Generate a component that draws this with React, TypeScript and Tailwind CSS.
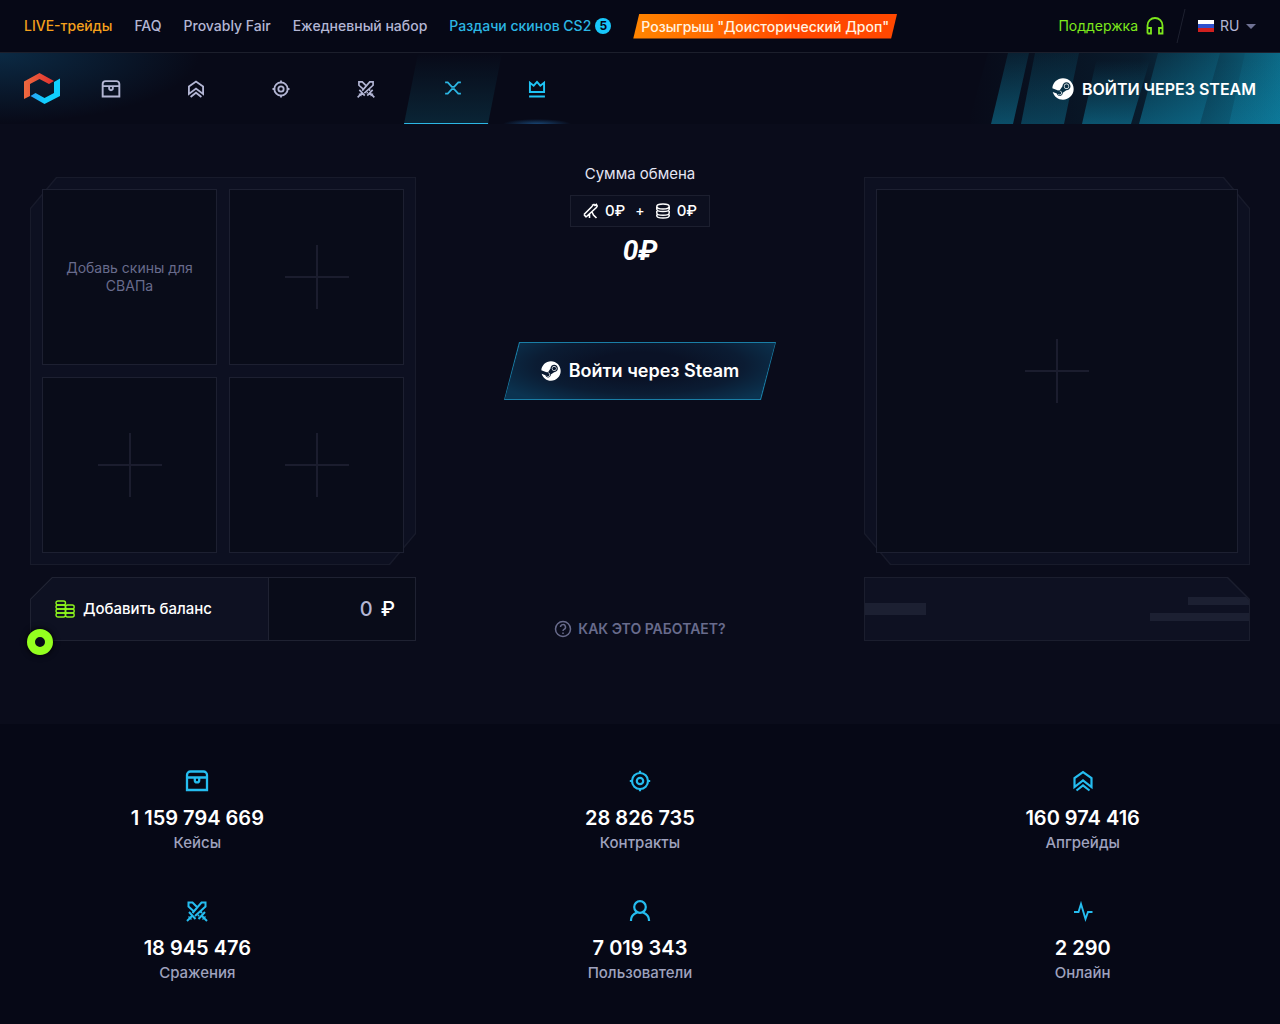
import React from 'react';
import { FaSteam } from 'react-icons/fa';

interface IconProps {
  className?: string;
}

interface Stat {
  label: string;
  value: string;
  icon: React.ComponentType<IconProps>;
}

function ChestIcon({ className }: IconProps) {
  return (
    <svg viewBox="0 0 24 24" className={className} fill="none" stroke="currentColor" strokeWidth="2.3" aria-hidden="true">
      <path d="M2 21V6a3.500 3.500 0 0 1 3.500-3.500h13A3.500 3.500 0 0 1 22 6v15zM2 8.500h20" />
      <path d="M9.800 8.500v2.700a2.200 2.200 0 0 0 4.400 0V8.500" />
    </svg>
  );
}

function UpgradeIcon({ className }: IconProps) {
  return (
    <svg viewBox="0 0 24 24" className={className} fill="none" stroke="currentColor" strokeWidth="2.2" aria-hidden="true">
      <path d="M3.500 18V9L12 3l8.500 6v9L12 11.500z" />
      <path d="M5.500 21.500 12 16.500l6.500 5" />
    </svg>
  );
}

function TargetIcon({ className }: IconProps) {
  return (
    <svg viewBox="0 0 24 24" className={className} fill="none" stroke="currentColor" strokeWidth="2.2" aria-hidden="true">
      <circle cx="12" cy="12" r="8" />
      <circle cx="12" cy="12" r="3.200" />
      <path d="M12 1.800V5M12 19v3.200M1.800 12H5M19 12h3.200" />
    </svg>
  );
}

function SwordsIcon({ className }: IconProps) {
  return (
    <svg viewBox="0 0 24 24" className={className} fill="none" stroke="currentColor" strokeWidth="2" aria-hidden="true">
      <path d="M7.500 14 16.500 3.500h4V7.500L10 17" />
      <path d="M9 12.500 3.500 7.500V3.500h4L12 8M13 16l1 1M15.500 12.500l1.500 1.500" />
      <path d="m4 13 6.500 7M7 17l-5 5M20 13l-6.500 7M17 17l5 5" />
      <path d="M3.500 17.500 6.500 20.500M20.500 17.500 17.500 20.500" strokeWidth="1.400" />
    </svg>
  );
}

function SwapIcon({ className }: IconProps) {
  return (
    <svg viewBox="0 0 24 24" className={className} fill="none" stroke="currentColor" strokeWidth="2.3" aria-hidden="true">
      <path d="M1.500 4.500H5l5.500 6h3l5.500-6h3.500M1.500 19.500H5l5.500-6h3l5.500 6h3.500" />
    </svg>
  );
}

function CrownIcon({ className }: IconProps) {
  return (
    <svg viewBox="0 0 24 24" className={className} fill="none" stroke="currentColor" strokeWidth="2.3" aria-hidden="true">
      <path d="M3.500 15.500V4.500L8 8l4-4.500L16 8l4.500-3.500v11zM2.500 21h19" />
    </svg>
  );
}

function UserIcon({ className }: IconProps) {
  return (
    <svg viewBox="0 0 24 24" className={className} fill="none" stroke="currentColor" strokeWidth="2.2" aria-hidden="true">
      <circle cx="12" cy="8" r="5.800" />
      <path d="M3 22v-1c0-3 2.500-6 6-7.500M21 22v-1c0-3-2.500-6-6-7.500" />
    </svg>
  );
}

function PulseIcon({ className }: IconProps) {
  return (
    <svg viewBox="0 0 24 24" className={className} fill="none" stroke="currentColor" strokeWidth="1.900" aria-hidden="true">
      <path d="M3 13h4.500l2.500-8 4.500 15 2.500-7h4.500" />
    </svg>
  );
}

function HeadphonesIcon({ className }: IconProps) {
  return (
    <svg viewBox="0 0 18 18" className={className} fill="none" stroke="currentColor" strokeWidth="1.800" aria-hidden="true">
      <path d="M1.500 16.500V8.500a7.500 7.500 0 0 1 15 0v8h-3.500v-5.500h3.500M1.500 11H5v5.500H1.500" />
    </svg>
  );
}

function CoinStackIcon({ className }: IconProps) {
  return (
    <svg viewBox="0 0 16 16" className={className} fill="none" stroke="currentColor" strokeWidth="1.500" aria-hidden="true">
      <ellipse cx="8" cy="3.500" rx="6.200" ry="2.500" />
      <path d="M1.800 4v2.300c0 3 12.400 3 12.400 0V4M1.800 8v2c0 3 12.400 3 12.400 0V8M1.800 11.500v1.300c0 3 12.400 3 12.400 0v-1.300" />
    </svg>
  );
}

function BalanceIcon({ className }: IconProps) {
  return (
    <svg viewBox="0 0 20 18" className={className} fill="none" stroke="currentColor" strokeWidth="1.400" aria-hidden="true">
      <rect x="1" y="1" width="9.500" height="4" rx="2" />
      <rect x="1" y="5" width="9.500" height="4" rx="2" />
      <rect x="1" y="9" width="9.500" height="4" rx="2" />
      <rect x="1" y="13" width="9.500" height="4" rx="2" />
      <rect x="10.500" y="5" width="8.700" height="4" rx="2" />
      <rect x="10.500" y="9" width="8.700" height="4" rx="2" />
      <rect x="10.500" y="13" width="8.700" height="4" rx="2" />
    </svg>
  );
}

function RifleIcon({ className }: IconProps) {
  return (
    <svg viewBox="0 0 16 16" className={className} fill="none" stroke="currentColor" strokeWidth="1.600" aria-hidden="true">
      <path d="M1 11.500 9.500 3M3 14 14 4M1 11.500 3 14M9 2.500l2-1 1 1 2-1.500M14 4V2M6.500 11v4M9 9l1.500 3 3 3" />
    </svg>
  );
}

function Logo() {
  return (
    <svg viewBox="0 0 36 31" className="w-9" role="img" aria-label="Logo">
      <defs>
        <linearGradient id="logo-red" x1="0" x2="1">
          <stop offset="0" stopColor="#ee6a3f" />
          <stop offset="1" stopColor="#e0302f" />
        </linearGradient>
        <linearGradient id="logo-blue" x1="0" x2="1">
          <stop offset="0" stopColor="#2b9df4" />
          <stop offset="0.500" stopColor="#10d0ff" />
        </linearGradient>
      </defs>
      <path d="M0 26V8.500L15.500 0 30 8l-5 3-9.500-5L6 11v12z" fill="url(#logo-red)" />
      <path d="M36 5.500v17.500L20.500 31 6.500 23l5-3 9 5 9.500-5V9z" fill="url(#logo-blue)" />
    </svg>
  );
}

function PlusMark() {
  return (
    <svg viewBox="0 0 64 64" className="size-16 text-[#1b1d2e]" stroke="currentColor" strokeWidth="2" aria-hidden="true">
      <path d="M32 0v64M0 32h64" />
    </svg>
  );
}

// Slanted light stripes behind the sign-in link
function HeaderStripes() {
  return (
    <svg viewBox="0 0 320 71" className="absolute right-0 top-0 h-full" aria-hidden="true">
      <defs>
        <linearGradient id="stripe" x1="0" y1="0" x2="0" y2="1">
          <stop offset="0" stopColor="#0e86a8" stopOpacity="0.250" />
          <stop offset="1" stopColor="#0e8bb0" stopOpacity="0.850" />
        </linearGradient>
        <linearGradient id="stripe-faded" x1="0" y1="0" x2="0" y2="1">
          <stop offset="0.100" stopColor="#0e86a8" stopOpacity="0" />
          <stop offset="1" stopColor="#0e8bb0" stopOpacity="0.750" />
        </linearGradient>
        <linearGradient id="stripe-base" x1="0" y1="0" x2="1" y2="0">
          <stop offset="0" stopColor="#0b5f7c" stopOpacity="0" />
          <stop offset="0.550" stopColor="#0b5f7c" stopOpacity="0.200" />
          <stop offset="1" stopColor="#0d7f9f" stopOpacity="0.800" />
        </linearGradient>
      </defs>
      <path d="M28 0h292v71H8z" fill="url(#stripe-base)" />
      <path d="M48 0h21L53 71H31z" fill="url(#stripe)" opacity="0.600" />
      <path d="M75 0h44l-15 71H61z" fill="url(#stripe)" opacity="0.450" />
      <path d="M138 0h54l-21 71h-49z" fill="url(#stripe-faded)" opacity="0.700" />
      <path d="M198 0h62l-20 71h-61z" fill="url(#stripe)" opacity="0.600" />
      <path d="M260 0h60v71h-80z" fill="url(#stripe-faded)" opacity="0.350" />
      <path d="M285 0h35v71h-51z" fill="url(#stripe)" opacity="0.350" />
    </svg>
  );
}

const topLinks = ['FAQ', 'Provably Fair', 'Ежедневный набор'];

const navItems = [
  { label: 'Кейсы', icon: ChestIcon },
  { label: 'Апгрейды', icon: UpgradeIcon },
  { label: 'Контракты', icon: TargetIcon },
  { label: 'Сражения', icon: SwordsIcon },
];

const stats: Stat[] = [
  { label: 'Кейсы', value: '1 159 794 669', icon: ChestIcon },
  { label: 'Контракты', value: '28 826 735', icon: TargetIcon },
  { label: 'Апгрейды', value: '160 974 416', icon: UpgradeIcon },
  { label: 'Сражения', value: '18 945 476', icon: SwordsIcon },
  { label: 'Пользователи', value: '7 019 343', icon: UserIcon },
  { label: 'Онлайн', value: '2 290', icon: PulseIcon },
];

function TopBar() {
  return (
    <div className="flex h-[53px] items-center justify-between border-b border-[#1c1f2c] bg-[#060816] px-6 text-sm font-medium text-[#b3b6d4]">
      <nav className="flex items-center gap-[22px] whitespace-nowrap">
        <a href="#" className="text-[#f5a11c]">LIVE-трейды</a>
        {topLinks.map((link) => (
          <a key={link} href="#">{link}</a>
        ))}
        <a href="#" className="flex items-center gap-1 text-[#2cb7e4]">
          Раздачи скинов CS2
          <span className="flex size-4 items-center justify-center rounded-full bg-[#18c8fb] text-xs font-bold text-[#060816]">5</span>
        </a>
        <a
          href="#"
          className="bg-linear-to-r from-[#ff8500] to-[#ff4800] to-60% px-2 leading-[25px] text-[#fff3e0] [clip-path:polygon(6px_0,100%_0,calc(100%-6px)_100%,0_100%)]"
        >
          Розыгрыш "Доисторический Дроп"
        </a>
      </nav>
      <div className="flex items-center">
        <a href="#" className="flex items-center gap-2 font-normal text-[#7de81c]">
          Поддержка
          <HeadphonesIcon className="size-[18px]" />
        </a>
        <svg viewBox="0 0 10 34" className="mx-3 h-[34px] w-[10px] stroke-[#1e2130]" aria-hidden="true">
          <path d="M9 0 1 34" />
        </svg>
        <svg viewBox="0 0 16 12" className="mr-1.5 h-3 w-4" aria-hidden="true">
          <path d="M0 0h16v4H0z" fill="#fff" />
          <path d="M0 4h16v4H0z" fill="#2f50cc" />
          <path d="M0 8h16v4H0z" fill="#d0201f" />
        </svg>
        <label className="flex items-center gap-1.5 font-normal">
          <select aria-label="Язык" className="w-5 appearance-none bg-transparent text-[#b3b6d4] outline-none">
            <option>RU</option>
          </select>
          <svg viewBox="0 0 10 5" className="h-[5px] w-[10px] fill-[#6f7294]" aria-hidden="true">
            <path d="M0 0h10L5 5z" />
          </svg>
        </label>
      </div>
    </div>
  );
}

function MainNav() {
  return (
    <header className="relative flex h-[71px] items-center justify-between overflow-hidden bg-[#080a18] bg-[radial-gradient(ellipse_200px_70px_at_0_0,#0b2a44,transparent)] px-6">
      <HeaderStripes />
      <nav className="flex h-full items-center">
        <a href="#"><Logo /></a>
        <div className="ml-2 flex h-full text-[#b3b6d4]">
          {navItems.map(({ label, icon: Icon }) => (
            <a key={label} href="#" aria-label={label} className="flex w-[85px] items-center justify-center">
              <Icon className="size-5" />
            </a>
          ))}
          <a
            href="#"
            aria-label="Обмен"
            className="-mx-1 flex w-[98px] items-center justify-center border-b border-[#2cb7e4] bg-linear-to-b from-transparent to-[#0a2435] text-[#2cb7e4] [clip-path:polygon(14px_0,100%_0,calc(100%-14px)_100%,0_100%)]"
          >
            <SwapIcon className="size-[18px]" />
          </a>
          <a
            href="#"
            aria-label="Награды"
            className="flex w-[78px] items-center justify-center bg-[radial-gradient(ellipse_34px_5px_at_50%_100%,#174472,transparent)] text-[#1fc4f5]"
          >
            <CrownIcon className="size-5" />
          </a>
        </div>
      </nav>
      <a href="#" className="relative flex items-center gap-2 font-semibold text-white">
        <FaSteam className="size-[22px]" />
        ВОЙТИ ЧЕРЕЗ STEAM
      </a>
    </header>
  );
}

function LeftColumn() {
  return (
    <div>
      <div className="relative grid grid-cols-2 gap-3 p-3">
        <div className="absolute inset-0 bg-[#181b2b] p-px [clip-path:polygon(26px_0,100%_0,100%_calc(100%-31px),calc(100%-26px)_100%,0_100%,0_31px)]">
          <div className="h-full bg-[#0d1021] [clip-path:polygon(26px_0,100%_0,100%_calc(100%-31px),calc(100%-26px)_100%,0_100%,0_31px)]" />
        </div>
        <div className="relative flex aspect-[175/176] items-center justify-center border border-[#1d2031] bg-[#090c19] p-4 text-center text-sm leading-[18px] text-[#686b8c]">
          Добавь скины для СВАПа
        </div>
        {[1, 2, 3].map((slot) => (
          <div key={slot} className="relative flex aspect-[175/176] items-center justify-center border border-[#1d2031] bg-[#090c19]">
            <PlusMark />
          </div>
        ))}
      </div>
      <div className="relative mt-3">
        <div className="bg-[#1f2232] p-px [clip-path:polygon(22px_0,100%_0,100%_100%,0_100%,0_22px)]">
          <div className="flex h-[62px] bg-[#090c19] [clip-path:polygon(22px_0,100%_0,100%_100%,0_100%,0_22px)]">
            <button className="flex w-[62%] items-center gap-2 border-r border-[#1f2232] bg-[#0e1122] pl-6 text-[15px] font-medium text-white">
              <BalanceIcon className="w-5 text-[#8df51d]" />
              Добавить баланс
            </button>
            <div className="flex grow items-center justify-end gap-2 pr-5 text-xl font-medium text-[#b3b6d4]">
              0 <span className="text-white">₽</span>
            </div>
          </div>
        </div>
        <button aria-label="Чат" className="absolute -bottom-[14px] -left-[3px] size-[26px] rounded-full border-8 border-[#94ff1f] bg-[#080b18] shadow-[0_0_6px_#000]" />
      </div>
    </div>
  );
}

function RightColumn() {
  return (
    <div>
      <div className="relative p-3">
        <div className="absolute inset-0 bg-[#181b2b] p-px [clip-path:polygon(0_0,calc(100%-26px)_0,100%_31px,100%_100%,26px_100%,0_calc(100%-31px))]">
          <div className="h-full bg-[#0d1021] [clip-path:polygon(0_0,calc(100%-26px)_0,100%_31px,100%_100%,26px_100%,0_calc(100%-31px))]" />
        </div>
        <div className="relative flex aspect-[362/364] items-center justify-center border border-[#1d2031] bg-[#090c19]">
          <PlusMark />
        </div>
      </div>
      <div className="mt-3 bg-[#1b1e2e] p-px [clip-path:polygon(0_0,calc(100%-22px)_0,100%_22px,100%_100%,0_100%)]">
        <div className="flex h-[62px] items-center justify-between bg-[#0e1122] [clip-path:polygon(0_0,calc(100%-22px)_0,100%_22px,100%_100%,0_100%)]">
          <div className="h-3 w-[61px] bg-[#1c2032]" />
          <div className="flex flex-col items-end gap-2">
            <div className="h-2 w-[61px] bg-[#1c2032]" />
            <div className="h-2 w-[99px] bg-[#1c2032]" />
          </div>
        </div>
      </div>
    </div>
  );
}

function SwapSummary() {
  return (
    <div className="-mt-4 flex flex-col items-center">
      <h1 className="text-[15px] leading-[26px] text-[#e4e5f4]">Сумма обмена</h1>
      <div className="mt-2 flex h-8 items-center gap-2.5 border border-[#1c1f2f] bg-[#0c0f1f] px-3 text-[15px] font-medium text-white">
        <span className="flex items-center gap-1.5">
          <RifleIcon className="size-4" />0₽
        </span>
        <span className="text-sm">+</span>
        <span className="flex items-center gap-1.5">
          <CoinStackIcon className="size-4" />0₽
        </span>
      </div>
      <div className="mt-2 font-[Roboto] text-[28px] leading-8 font-bold text-white italic">0₽</div>
      <button className="mt-[75px] bg-[#1a7ea6] p-px [clip-path:polygon(15px_0,100%_0,calc(100%-15px)_100%,0_100%)]">
        <span className="flex h-14 w-[270px] items-center justify-center gap-2 bg-[#0b3350] bg-[radial-gradient(ellipse_160px_44px_at_50%_40%,#0a1226_30%,#0b1c33_65%,#0b3350)] text-lg font-semibold text-white [clip-path:polygon(15px_0,100%_0,calc(100%-15px)_100%,0_100%)]">
          <FaSteam className="size-5" />
          Войти через Steam
        </span>
      </button>
      <button className="mt-auto mb-[2px] flex items-center gap-1.5 text-sm font-semibold text-[#686b8c] uppercase">
        <svg viewBox="0 0 18 18" className="size-[18px]" fill="none" stroke="currentColor" strokeWidth="1.500" aria-hidden="true">
          <circle cx="9" cy="9" r="7.500" />
          <path d="M6.500 7a2.500 2.500 0 1 1 3.500 2.400c-.700.300-1 .700-1 1.600M9 12.500V14" />
        </svg>
        Как это работает?
      </button>
    </div>
  );
}

function Stats() {
  return (
    <footer className="grid grow grid-cols-3 content-start gap-x-24 gap-y-11 bg-[#060816] px-6 pt-[45px] pb-8">
      {stats.map(({ label, value, icon: Icon }) => (
        <div key={label} className="flex flex-col items-center">
          <Icon className="size-6 text-[#25bdf0]" />
          <div className="mt-3 text-xl leading-[26px] font-semibold text-white">{value}</div>
          <div className="text-[15px] leading-6 font-medium text-[#9fa2be]">{label}</div>
        </div>
      ))}
    </footer>
  );
}

export default function App() {
  return (
    <div className="flex min-h-screen flex-col bg-[#0a0c1b] font-[Inter,'Noto_Sans',sans-serif]">
      <TopBar />
      <MainNav />
      <main className="grid grid-cols-[1fr_448px_1fr] px-[30px] pt-[53px] pb-[83px]">
        <LeftColumn />
        <SwapSummary />
        <RightColumn />
      </main>
      <Stats />
    </div>
  );
}
